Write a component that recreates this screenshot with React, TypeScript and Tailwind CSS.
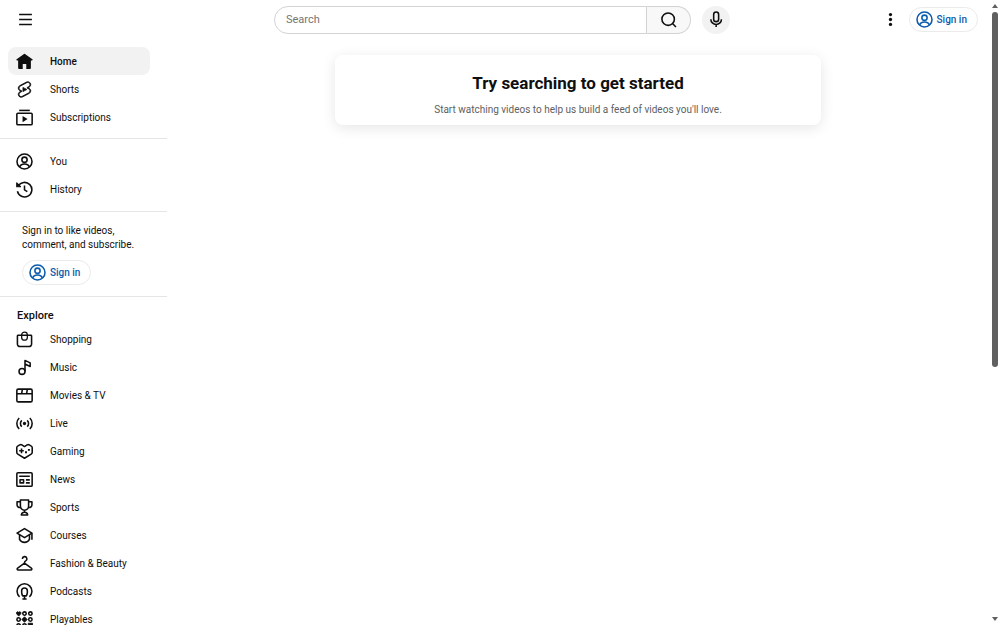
import type { ReactNode } from "react";

type IconProps = { children: ReactNode; className?: string };

function Icon({ children, className = "size-[17px]" }: IconProps) {
  return (
    <svg
      viewBox="0 0 24 24"
      className={`shrink-0 ${className}`}
      fill="none"
      stroke="currentColor"
      strokeWidth={2.2}
      strokeLinejoin="round"
      aria-hidden="true"
    >
      {children}
    </svg>
  );
}

const account = (
  <>
    <circle cx="12" cy="12" r="10.6" />
    <circle cx="12" cy="9.5" r="3.7" />
    <path d="M5.2 19.8c.7-3.200 3.400-4.400 6.800-4.400s6.100 1.200 6.800 4.400" />
  </>
);

const mainLinks = [
  {
    label: "Home",
    icon: (
      <path
        fill="currentColor"
        stroke="none"
        d="M11.300 1.250.900 8.900a1 1 0 0 0 .6 1.800H3V21a1.500 1.500 0 0 0 1.500 1.500H9.500V15.500h5V22.500h5A1.500 1.500 0 0 0 21 21V10.700h1.500a1 1 0 0 0 .6-1.800L12.700 1.250a1.200 1.200 0 0 0-1.400 0z"
      />
    ),
  },
  {
    label: "Shorts",
    icon: (
      <g transform="translate(-1.200 -1.200) scale(1.100)">
        <path
          fill="currentColor"
          strokeWidth={1}
          d="M10 14.65v-5.3L15 12l-5 2.65zm7.77-4.33-1.2-.5L18 9.06c1.84-.96 2.53-3.23 1.56-5.06s-3.24-2.53-5.07-1.56L6 6.94c-1.29.68-2.07 2.04-2 3.49.07 1.42.93 2.67 2.22 3.25.03.01 1.2.5 1.2.5L6 14.93c-1.83.97-2.53 3.24-1.56 5.07.97 1.83 3.24 2.53 5.07 1.56l8.5-4.5c1.29-.68 2.06-2.04 1.99-3.49-.07-1.42-.94-2.68-2.23-3.25zm-.23 5.86-8.5 4.5c-1.34.71-3.01.2-3.72-1.14-.71-1.34-.2-3.01 1.14-3.72l2.04-1.08v-1.21l-.69-.28-1.11-.46c-.99-.41-1.65-1.35-1.7-2.41-.05-1.06.52-2.06 1.46-2.56l8.5-4.5c1.34-.71 3.01-.2 3.72 1.14.71 1.34.2 3.01-1.14 3.72L15.5 9.26v1.21l1.8.74c.99.41 1.65 1.35 1.7 2.41.05 1.06-.52 2.06-1.46 2.56z"
        />
      </g>
    ),
  },
  {
    label: "Subscriptions",
    icon: (
      <>
        <path d="M4.500 2h15" />
        <rect x="1.200" y="6" width="21.600" height="16.300" rx="1.500" />
        <path fill="currentColor" stroke="none" d="M9.300 9.800v8.800l7-4.400z" />
      </>
    ),
  },
];

const youLinks = [
  { label: "You", icon: account },
  {
    label: "History",
    icon: (
      <>
        <path d="M3.200 7A10.300 10.300 0 1 1 2 14.500" />
        <path fill="currentColor" strokeWidth={1.5} d="M1 2.500v5.500h5.500z" />
        <path d="M12 6.500V12.500l4 2.500" />
      </>
    ),
  },
];

const exploreLinks = [
  {
    label: "Shopping",
    icon: (
      <>
        <path d="M3 6h18a1 1 0 0 1 1 1V18.500a3.500 3.500 0 0 1-3.500 3.500h-13A3.500 3.500 0 0 1 2 18.500V7a1 1 0 0 1 1-1z" />
        <path d="M8 9V5.500a4 4 0 0 1 8 0V9a4 4 0 0 1-8 0z" strokeWidth={1.8} />
      </>
    ),
  },
  {
    label: "Music",
    icon: (
      <>
        <circle cx="8.500" cy="17.500" r="4.200" />
        <path d="M12.700 17.500V2l7.300 3.500v5l-7.300-3.500" />
      </>
    ),
  },
  {
    label: "Movies & TV",
    icon: (
      <>
        <rect x="1.200" y="3" width="21.600" height="18" rx="2" />
        <path d="M1.200 9.500h21.600M8 9.500l1-6.500M15 9.500l1-6.500" />
      </>
    ),
  },
  {
    label: "Live",
    icon: (
      <>
        <circle cx="12" cy="12" r="2.300" fill="currentColor" stroke="none" />
        <path d="M8.200 7.500a6.200 6.200 0 0 0 0 9M15.800 7.500a6.200 6.200 0 0 1 0 9M4.500 4.200a10.800 10.800 0 0 0 0 15.600M19.500 4.200a10.800 10.800 0 0 1 0 15.600" />
      </>
    ),
  },
  {
    label: "Gaming",
    icon: (
      <>
        <path d="M12 5 8.300 2.700a3 3 0 0 0-3 0L2.300 4.400A2.500 2.500 0 0 0 1.100 6.600v6.600a3 3 0 0 0 1.500 2.600L12 21.500l9.400-5.700a3 3 0 0 0 1.500-2.600V6.600a2.500 2.500 0 0 0-1.300-2.200l-2.900-1.700a3 3 0 0 0-3 0z" />
        <path d="M4.500 11h6.500M7.800 7.700v6.600" />
        <path stroke="none" fill="currentColor" d="M12.700 11.500h2.800v2.800h-2.800zM16.800 8.300h2.800v2.800h-2.800z" />
      </>
    ),
  },
  {
    label: "News",
    icon: (
      <>
        <rect x="1.200" y="2.500" width="21.600" height="19" rx="1.500" />
        <path d="M4.500 7.500h15M14 12.500h5.500M14 16.800h5.500" />
        <rect x="5.700" y="12.300" width="5" height="4.500" />
      </>
    ),
  },
  {
    label: "Sports",
    icon: (
      <>
        <path d="M6.200 1.500h11.600v8.500a5.800 5.800 0 0 1-11.600 0z" />
        <path d="M6.200 4H1.500v4c0 2.500 2 4 5.200 4M17.800 4h4.700v4c0 2.500-2 4-5.200 4" />
        <path d="M12 15.800v3M7.500 22.500c.5-2.500 2-3.700 4.500-3.700s4 1.200 4.500 3.700z" />
      </>
    ),
  },
  {
    label: "Courses",
    icon: (
      <>
        <path d="M12 2.300 1.500 8.700 12 15l10.500-6.300z" />
        <path d="M5 11v6.500c1.500 2.800 4 4.200 7 4.200s5.500-1.400 7-4.200V11M22.500 8.700v9.300" />
      </>
    ),
  },
  {
    label: "Fashion & Beauty",
    icon: (
      <path d="M9 5.500a3.200 3.200 0 1 1 4.700 2.800c-1.100.6-1.700 1.200-1.700 2.400v.8M12 11.500 2.300 18.400c-1.300 1-.7 2.800.8 2.800h17.800c1.500 0 2.100-1.800.8-2.800z" />
    ),
  },
  {
    label: "Podcasts",
    icon: (
      <>
        <path d="M5 19.500a10.500 10.500 0 1 1 14 0" />
        <path d="M8 11a4 4 0 0 1 8 0v2.500c0 2-.7 3.500-1.700 4.700H9.700C8.700 17 8 15.500 8 13.500z" />
        <path d="M12 18v3.500M9 22.500h6" />
      </>
    ),
  },
  {
    label: "Playables",
    icon: (
      <>
        <path fill="currentColor" strokeWidth={1.2} d="M3.800 7.200.800 3.900C-.2 2 2.300-.2 3.800 1.900 5.300-.2 7.800 2 6.800 3.900z" />
        <circle cx="12" cy="3.600" r="2.400" />
        <circle cx="20.300" cy="3.600" r="2.400" />
        <circle cx="3.700" cy="12" r="2.400" />
        <path fill="currentColor" strokeWidth={1.200} d="m12 8.200 3.800 3.800-3.800 3.800L8.200 12z" />
        <circle cx="20.300" cy="12" r="2.400" />
        <circle cx="3.700" cy="20.400" r="2.400" />
        <circle cx="12" cy="20.400" r="2.400" />
        <path fill="currentColor" strokeWidth={1.200} d="M17.300 17.300h6v6h-6z" />
      </>
    ),
  },
];

type NavLink = { label: string; icon: ReactNode };

function NavList({ links, active }: { links: NavLink[]; active?: string }) {
  return (
    <ul className="pr-[17px] pl-2">
      {links.map((link) => (
        <li key={link.label}>
          <a
            href="#"
            aria-current={link.label === active ? "page" : undefined}
            className={
              link.label === active
                ? "flex h-7 items-center gap-[17px] rounded-lg bg-[#f2f2f2] px-2 font-medium"
                : "flex h-7 items-center gap-[17px] rounded-lg px-2 hover:bg-[#f2f2f2]"
            }
          >
            <Icon>{link.icon}</Icon>
            <span>{link.label}</span>
          </a>
        </li>
      ))}
    </ul>
  );
}

function SignIn() {
  return (
    <a
      href="#"
      className="inline-flex h-[25px] items-center gap-1 rounded-full border border-[#ebebeb] pr-[10px] pl-[6px] font-medium text-[#0b5cad]"
    >
      <Icon>{account}</Icon>
      Sign in
    </a>
  );
}

function Header() {
  return (
    <header className="grid h-[39px] shrink-0 grid-cols-[263fr_456px_248fr] items-center px-[11px]">
      <div className="flex">
        <button type="button" aria-label="Guide" className="grid size-7 place-items-center">
          <Icon>
            <path d="M3 5h18M3 12h18M3 19h18" />
          </Icon>
        </button>
      </div>
      <div className="flex items-center gap-[11px]">
        <form className="flex h-7 flex-1" role="search" onSubmit={(e) => e.preventDefault()}>
          <input
            type="text"
            aria-label="Search"
            placeholder="Search"
            className="min-w-0 flex-1 rounded-l-full border border-[#d3d3d3] pt-px pl-[11px] text-[11px] outline-none placeholder:text-[#757575]"
          />
          <button
            type="submit"
            aria-label="Search"
            className="grid w-11 place-items-center rounded-r-full border border-l-0 border-[#d3d3d3] bg-[#f8f8f8]"
          >
            <Icon>
              <circle cx="11.500" cy="11.500" r="8.800" />
              <path d="m17.700 17.700 4.800 4.800" />
            </Icon>
          </button>
        </form>
        <button
          type="button"
          aria-label="Search with your voice"
          className="grid size-7 place-items-center rounded-full bg-[#f2f2f2]"
        >
          <Icon>
            <rect x="8" y="1.500" width="7" height="13.500" rx="3.500" />
            <path d="M4 11.500a7.500 7.500 0 0 0 15 0M11.500 19v3.500" />
          </Icon>
        </button>
      </div>
      <div className="flex items-center justify-end gap-1">
        <button type="button" aria-label="Settings" className="grid size-7 place-items-center">
          <Icon>
            <g fill="currentColor" stroke="none">
              <circle cx="12" cy="5" r="2.300" />
              <circle cx="12" cy="12" r="2.300" />
              <circle cx="12" cy="19" r="2.300" />
            </g>
          </Icon>
        </button>
        <SignIn />
      </div>
    </header>
  );
}

function Sidebar() {
  return (
    <nav className="w-[167px] shrink-0 overflow-hidden">
      <div className="border-b border-[#e5e5e5] pt-2 pb-[7px]">
        <NavList links={mainLinks} active="Home" />
      </div>
      <div className="border-b border-[#e5e5e5] py-2">
        <NavList links={youLinks} />
      </div>
      <div className="border-b border-[#e5e5e5] pt-3 pr-6 pb-[11px] pl-[22px]">
        <p className="mb-2 leading-[14px]">Sign in to like videos, comment, and subscribe.</p>
        <SignIn />
      </div>
      <div className="pt-[10px]">
        <h3 className="flex h-[18px] items-center pl-[17px] text-[11px] font-medium">Explore</h3>
        <NavList links={exploreLinks} />
      </div>
    </nav>
  );
}

function Scrollbar() {
  return (
    <div className="flex w-[11px] shrink-0 flex-col items-center gap-1 py-1" aria-hidden="true">
      <svg viewBox="0 0 6 4" className="h-1 w-[6px]">
        <path d="M3 0 6 4H0z" fill="#606060" />
      </svg>
      <div className="flex min-h-0 flex-1 flex-col">
        <div className="h-[59%] w-[6px] rounded-full bg-[#606060]" />
      </div>
      <svg viewBox="0 0 6 4" className="h-1 w-[6px]">
        <path d="M3 4 6 0H0z" fill="#606060" />
      </svg>
    </div>
  );
}

export default function App() {
  return (
    <div className="flex h-screen overflow-hidden bg-white font-[Roboto,sans-serif] text-[10px] text-[#0f0f0f]">
      <div className="flex min-w-0 flex-1 flex-col">
        <Header />
        <div className="flex min-h-0 flex-1">
          <Sidebar />
          <main className="min-w-0 flex-1 px-4 pt-4">
            <section className="mx-auto max-w-[486px] rounded-lg px-4 pt-4 pb-2 text-center shadow-[0_3px_14px_rgba(0,0,0,0.1)]">
              <h1 className="text-[17px] leading-6 font-bold">Try searching to get started</h1>
              <p className="mt-2 leading-[14px] text-[#606060]">
                Start watching videos to help us build a feed of videos you'll love.
              </p>
            </section>
          </main>
        </div>
      </div>
      <Scrollbar />
    </div>
  );
}
